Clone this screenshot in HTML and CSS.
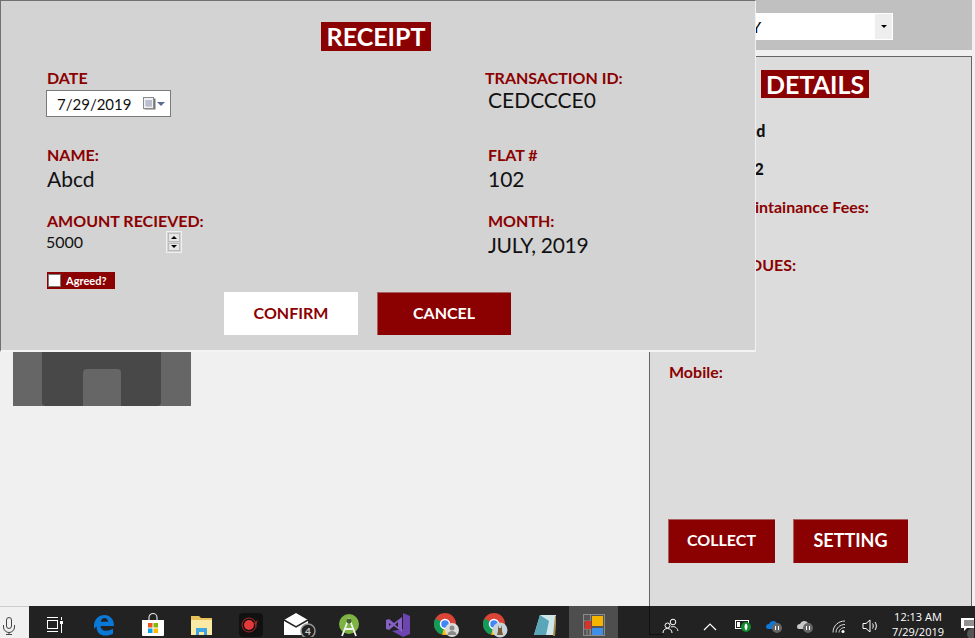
FILE: index.html
```html
<!DOCTYPE html>
<html lang="en">
<head>
    <meta charset="UTF-8">
    <title>Receipt</title>
    <link rel="stylesheet" href="styles.css">
</head>
<body>
    <div class="app">
        <div class="main">
            <div class="preview">
                <div class="preview-inner">
                    <div class="preview-knob"></div>
                </div>
            </div>
        </div>
        <div class="side">
            <div class="side-top">
                <div class="combo">
                    <span class="combo-text">JULY</span>
                    <span class="combo-btn"><i class="arrow-down"></i></span>
                </div>
            </div>
            <div class="details">
                <div class="details-head"><span class="banner">DETAILS</span></div>
                <div class="info-row info-name">Name: <b>Abcd</b></div>
                <div class="info-row info-flat">Flat #: <b>102</b></div>
                <div class="info-row info-fees">Maintainance Fees:</div>
                <div class="info-row info-dues">TOTAL DUES:</div>
                <div class="info-row info-mobile">Mobile:</div>
                <div class="details-actions">
                    <button class="action action-collect">COLLECT</button>
                    <button class="action action-setting">SETTING</button>
                </div>
            </div>
        </div>
    </div>

    <div class="receipt">
        <div class="receipt-head"><span class="banner banner-receipt">RECEIPT</span></div>
        <div class="receipt-grid">
            <div class="col-left">
                <div class="field field-date">
                    <div class="label">DATE</div>
                    <div class="date-input">
                        <span class="date-text">7/29/2019</span>
                        <svg class="cal" width="13" height="13" viewBox="0 0 13 13">
                            <rect x="1.5" y="1.5" width="11" height="11" fill="#777"/>
                            <rect x="0.5" y="0.5" width="10" height="11" fill="#eef0f4" stroke="#8b8b8b"/>
                            <path d="M2 4h7M2 6h7M2 8h7M4 3v7M6 3v7M8 3v7" stroke="#a9adc0" stroke-width="1"/>
                        </svg>
                        <i class="cal-arrow"></i>
                    </div>
                </div>
                <div class="field field-name">
                    <div class="label">NAME:</div>
                    <div class="value">Abcd</div>
                </div>
                <div class="field field-amount">
                    <div class="label">AMOUNT RECIEVED:</div>
                    <div class="amount-row">
                        <span class="amount">5000</span>
                        <span class="spinner">
                            <span class="spin-btn"><i class="arrow-up"></i></span>
                            <span class="spin-btn"><i class="arrow-down"></i></span>
                        </span>
                    </div>
                </div>
                <label class="agree"><span class="agree-box"></span>Agreed?</label>
            </div>
            <div class="col-right">
                <div class="field field-txn">
                    <div class="label label-txn">TRANSACTION ID:</div>
                    <div class="value value-txn">CEDCCCE0</div>
                </div>
                <div class="field field-flat">
                    <div class="label">FLAT #</div>
                    <div class="value">102</div>
                </div>
                <div class="field field-month">
                    <div class="label">MONTH:</div>
                    <div class="value value-month">JULY, 2019</div>
                </div>
            </div>
        </div>
        <div class="receipt-actions">
            <button class="btn btn-confirm">CONFIRM</button>
            <button class="btn btn-cancel">CANCEL</button>
        </div>
    </div>

    <div class="taskbar">
        <div class="mic">
            <svg width="12" height="18" viewBox="0 0 12 18" fill="none" stroke="#444" stroke-width="1">
                <rect x="3.500" y="0.500" width="5" height="11" rx="2.500"/>
                <path d="M0.500 8v2a5.500 5.500 0 0 0 11 0V8M6 15.500V17M3 17.500h6"/>
            </svg>
        </div>
        <div class="task-icons">
            <span class="task-icon">
                <svg width="18" height="16" viewBox="0 0 18 16" fill="none" stroke="#fff">
                    <rect x="1.500" y="3.500" width="10" height="8"/>
                    <path d="M1 0.500h11M1 14.500h11M15.500 0v3M15.500 7v9"/>
                    <rect x="14" y="4" width="3" height="3" fill="#fff" stroke="none"/>
                </svg>
            </span>
            <span class="task-icon">
                <svg width="22" height="22" viewBox="0 0 22 22">
                    <path d="M1 11C1.500 5 6 1 11.500 1 17 1 21 5 21 12H7.500c.2 3 2.500 4.800 5.500 4.800 2.500 0 5-.7 7-2v5c-2 1.200-4.500 1.800-7.500 1.800C6 21.600 3 17 3.800 12.500 2.800 13 2 13.500 1 15Zm6.800-3.200h7.400C15 5.500 13.500 4 11.500 4S8 5.500 7.800 7.800Z" fill="#0a78d7"/>
                </svg>
            </span>
            <span class="task-icon">
                <svg width="24" height="24" viewBox="0 0 24 24">
                    <path d="M8 7V4.500a4 4 0 0 1 8 0V7" fill="none" stroke="#ddd" stroke-width="1.200"/>
                    <path d="M1 7h22v15a1 1 0 0 1-1 1H2a1 1 0 0 1-1-1Z" fill="#fff"/>
                    <rect x="7" y="10" width="4.500" height="4.500" fill="#f25022"/>
                    <rect x="12.500" y="10" width="4.500" height="4.500" fill="#7fba00"/>
                    <rect x="7" y="15.500" width="4.500" height="4.500" fill="#00a4ef"/>
                    <rect x="12.500" y="15.500" width="4.500" height="4.500" fill="#ffb900"/>
                </svg>
            </span>
            <span class="task-icon">
                <svg width="22" height="19" viewBox="0 0 22 19">
                    <path d="M0 0h8l2 2h11v17H0Z" fill="#e8c35a"/>
                    <path d="M0 4h21v15H0Z" fill="#fbe9a6"/>
                    <path d="M5 19v-7h11v7h-3v-3H8v3Z" fill="#3ea6e0"/>
                </svg>
            </span>
            <span class="task-icon">
                <svg width="24" height="24" viewBox="0 0 24 24">
                    <rect width="24" height="24" rx="4" fill="#111"/>
                    <circle cx="10" cy="12" r="5" fill="#e23a3a"/>
                    <circle cx="10" cy="12" r="7" fill="none" stroke="#a92a2a"/>
                    <path d="M15 10l4-3-2 5 1 3Z" fill="#a92a2a"/>
                </svg>
            </span>
            <span class="task-icon">
                <svg width="33" height="24" viewBox="0 0 33 24">
                    <path d="M1 7 13 0l12 7v15H1Z" fill="#fff"/>
                    <path d="M1 7l12 7 12-7" fill="none" stroke="#222" stroke-width="1.500"/>
                    <circle cx="25" cy="18" r="7" fill="#222" stroke="#999" stroke-width="1.500"/>
                    <text x="25" y="22" class="mail-count">4</text>
                </svg>
            </span>
            <span class="task-icon">
                <svg width="24" height="24" viewBox="0 0 24 24">
                    <circle cx="12" cy="11" r="10" fill="#7cb342"/>
                    <path d="M12 5 5 23M12 5l7 18M7.500 16h9" stroke="#f2f2f2" stroke-width="1.800" fill="none"/>
                    <circle cx="12" cy="8" r="2.500" fill="#44602a"/>
                </svg>
            </span>
            <span class="task-icon">
                <svg width="26" height="24" viewBox="0 0 26 24">
                    <path d="M18 0l7 3v18l-7 3-11-6 11-2Z" fill="#6c45b0"/>
                    <path d="M1 7l3-1 5 4 8-6v15l-8-6-5 4-3-1Zm3 3v3l2-1.500Zm9-1-3 2.500 3 2.500Z" fill="#8661c5" fill-rule="evenodd"/>
                </svg>
            </span>
            <span class="task-icon chrome">
                <svg width="26" height="26" viewBox="0 0 26 26">
                    <circle cx="11" cy="12" r="11" fill="#db4437"/>
                    <path d="M11 12 22 12A11 11 0 0 1 8 22.600Z" fill="#f4c20d"/>
                    <path d="M11 12 8 22.600A11 11 0 0 1 1.500 6.500Z" fill="#0f9d58"/>
                    <circle cx="11" cy="12" r="4.500" fill="#4285f4" stroke="#fff" stroke-width="1.500"/>
                    <circle cx="18" cy="18" r="7" fill="#dcdcdc"/>
                    <circle cx="18" cy="16" r="2.500" fill="#8a8a8a"/>
                    <path d="M13.500 23a4.500 4 0 0 1 9 0Z" fill="#8a8a8a"/>
                </svg>
            </span>
            <span class="task-icon chrome">
                <svg width="26" height="26" viewBox="0 0 26 26">
                    <circle cx="11" cy="12" r="11" fill="#db4437"/>
                    <path d="M11 12 22 12A11 11 0 0 1 8 22.600Z" fill="#f4c20d"/>
                    <path d="M11 12 8 22.600A11 11 0 0 1 1.500 6.500Z" fill="#0f9d58"/>
                    <circle cx="11" cy="12" r="4.500" fill="#4285f4" stroke="#fff" stroke-width="1.500"/>
                    <circle cx="17" cy="18" r="7.500" fill="#c8d4dc"/>
                    <path d="M15 13l1 3h2l1-3v6l1 4h-6l1-4Z" fill="#7a5b3a"/>
                </svg>
            </span>
            <span class="task-icon">
                <svg width="24" height="22" viewBox="0 0 24 22">
                    <path d="M7 1h16l-1 20H1Z" fill="#cfe6ea"/>
                    <path d="M7 1 1 21h12l3-14Z" fill="#5aa6b8"/>
                    <path d="M22 2h1l-1 20h-2Z" fill="#a8873f"/>
                </svg>
            </span>
            <span class="task-icon task-active">
                <svg width="22" height="22" viewBox="0 0 22 22">
                    <rect x="0.500" y="0.500" width="21" height="21" fill="#555" stroke="#8a8a8a"/>
                    <path d="M7.500 1v20M1 7h6M1 15h6M7 15v6M4 15v6" stroke="#8a8a8a" fill="none"/>
                    <rect x="9" y="2" width="11" height="10" fill="#f5b400"/>
                    <rect x="9" y="14" width="11" height="7" fill="#3f8fe6"/>
                    <rect x="2" y="7" width="6" height="8" fill="#d8322a"/>
                </svg>
            </span>
        </div>
        <div class="tray">
            <svg class="tray-people" width="17" height="16" viewBox="0 0 17 16" fill="none" stroke="#fff">
                <circle cx="11" cy="4" r="2.800"/>
                <circle cx="5.500" cy="7.500" r="2.500"/>
                <path d="M1 15c0-3 2-4.500 4.500-4.500S10 12 10 15M9 9c3-1 6 0 7 4"/>
            </svg>
            <svg class="tray-chevron" width="14" height="8" viewBox="0 0 14 8" fill="none" stroke="#fff" stroke-width="1.200"><path d="M1 7l6-6 6 6"/></svg>
            <svg class="tray-battery" width="16" height="14" viewBox="0 0 16 14">
                <rect x="0.500" y="1.500" width="13" height="8" fill="none" stroke="#fff"/>
                <rect x="2" y="3" width="3" height="5" fill="#fff"/>
                <circle cx="11" cy="8" r="5" fill="#0f8a2d"/>
                <path d="M11 4.500c2 1 2 5 0 7-2-2-2-6 0-7Z" fill="#fff"/>
            </svg>
            <svg class="tray-cloud" width="17" height="14" viewBox="0 0 17 14">
                <path d="M1 8a3 3 0 0 1 3-3 4.500 4.500 0 0 1 8-1 3 3 0 0 1 0 6H3a2 2 0 0 1-2-2Z" fill="#1078d4"/>
                <circle cx="12" cy="9" r="5" fill="#666"/>
                <path d="M10.500 7v4M13.500 7v4" stroke="#fff"/>
            </svg>
            <svg class="tray-cloud" width="17" height="14" viewBox="0 0 17 14">
                <path d="M1 8a3 3 0 0 1 3-3 4.500 4.500 0 0 1 8-1 3 3 0 0 1 0 6H3a2 2 0 0 1-2-2Z" fill="#c8c8c8"/>
                <circle cx="12" cy="9" r="5" fill="#666"/>
                <path d="M10.500 7v4M13.500 7v4" stroke="#fff"/>
            </svg>
            <svg class="tray-wifi" width="14" height="13" viewBox="0 0 14 13" fill="none" stroke="#ddd">
                <path d="M1 12.500C1 6 6 1 13 1M4 12.500C4 8 8 4.500 13 4.500M7 12.500c0-2.500 2.500-5 6-5"/>
                <circle cx="11" cy="11.500" r="1.500" fill="#fff" stroke="none"/>
            </svg>
            <svg class="tray-sound" width="17" height="14" viewBox="0 0 17 14" fill="none" stroke="#fff">
                <path d="M1 4.500h3L8 1v12L4 9.500H1ZM10.500 4.500c1 1.500 1 3.500 0 5M13 3c1.800 2.500 1.800 5.500 0 8"/>
            </svg>
            <div class="clock">
                <div class="clock-time">12:13 AM</div>
                <div class="clock-date">7/29/2019</div>
            </div>
            <svg class="tray-notify" width="13" height="20" viewBox="0 0 13 20">
                <path d="M0 0h13v10H6l-3 3v-3H0Z" fill="#fff"/>
                <path d="M3 3h10M3 5h10M3 7h10" stroke="#222"/>
                <circle cx="12" cy="16" r="6" fill="#555"/>
            </svg>
        </div>
        <div class="taskbar-edge"></div>
    </div>
</body>
</html>
```

FILE: styles.css
```css
* {
    box-sizing: border-box;
}
body {
    margin: 0;
    width: 975px;
    height: 638px;
    overflow: hidden;
    position: relative;
    font-family: 'Lato', sans-serif;
    background-color: #f0f0f0;
    display: flex;
    flex-direction: column;
}
.app {
    display: flex;
    height: 606px;
}
.main {
    width: 649px;
    padding: 40px 0 0 13px;
}
.preview {
    width: 178px;
    height: 366px;
    background-color: #666;
    padding: 0 30px 0 29px;
}
.preview-inner {
    height: 100%;
    background-color: #484848;
    border-radius: 0 0 4px 4px;
    display: flex;
    align-items: flex-end;
    justify-content: center;
}
.preview-knob {
    width: 38px;
    height: 37px;
    background-color: #666;
    border-radius: 4px 4px 0 0;
}
.side {
    width: 323px;
    display: flex;
    flex-direction: column;
}
.side-top {
    height: 50px;
    background-color: #c0c0c0;
    padding: 13px 0 0 0;
}
.combo {
    width: 244px;
    height: 27px;
    background-color: #fff;
    display: flex;
    justify-content: space-between;
    font-size: 16px;
    line-height: 27px;
    padding-left: 77px;
}
.combo-btn {
    width: 17px;
    margin: 1px;
    background-color: #eee;
    display: flex;
    align-items: center;
    justify-content: center;
}
.details {
    margin-top: 6px;
    height: 550px;
    background-color: #dcdcdc;
    border: 1px solid #666;
    border-bottom: 0;
    padding: 0 0 0 18px;
    font-size: 16px;
    font-weight: 700;
    color: #8b0000;
}
.details-head {
    padding: 13px 0 0 93px;
    height: 64px;
}
.banner {
    display: inline-block;
    background-color: #8b0000;
    color: #fff;
    font-size: 25px;
    font-weight: 700;
    line-height: 28px;
    padding: 0 5px;
}
.info-row {
    line-height: 20px;
}
.info-row b {
    color: #111;
}
.info-name {
    margin-left: 10px;
}
.info-flat {
    margin: 18px 0 0 20px;
}
.info-fees {
    margin: 18px 0 0 64px;
}
.info-dues {
    margin: 38px 0 0 29px;
}
.info-mobile {
    margin: 87px 0 0 1px;
}
.details-actions {
    display: flex;
    gap: 18px;
    margin-top: 137px;
}
.action {
    height: 44px;
    border: 0;
    background-color: #8b0000;
    box-shadow: inset 1px 1px 0 #a86060;
    color: #fff;
    font-family: 'Lato', sans-serif;
    font-weight: 700;
    font-size: 16px;
    padding: 0 0 3px 0;
}
.action-collect {
    width: 107px;
}
.action-setting {
    width: 115px;
    font-size: 18px;
}

/* receipt dialog sits over the main window */
.receipt {
    position: absolute;
    left: 0;
    top: 0;
    width: 756px;
    height: 352px;
    background-color: #d3d3d3;
    border: 1px solid #707070;
    border-right: 1px solid #f0f0f0;
    border-bottom: 2px solid #f4f4f4;
    color: #111;
}
.receipt-head {
    text-align: center;
    padding: 21px 4px 0 0;
    height: 69px;
}
.banner-receipt {
    line-height: 29px;
    padding: 0 6px;
}
.receipt-grid {
    display: flex;
    justify-content: space-between;
    padding-left: 46px;
}
.col-left {
    width: 438px;
}
.col-right {
    width: 267px;
}
.label {
    font-size: 16px;
    font-weight: 700;
    color: #8b0000;
    line-height: 15px;
}
.value {
    font-size: 21px;
    line-height: 26px;
    margin-top: 4px;
}
.field-name {
    margin-top: 30px;
}
.field-amount {
    margin-top: 21px;
}
.date-input {
    width: 125px;
    height: 27px;
    margin: 5px 0 0 -1px;
    background-color: #fff;
    border: 1px solid #7a7a7a;
    font-size: 15px;
    line-height: 25px;
    padding-left: 10px;
    display: flex;
    align-items: center;
}
.date-text {
    padding-top: 1px;
}
.cal {
    margin-left: 12px;
}
.cal-arrow {
    width: 0;
    height: 0;
    margin-left: 1px;
    border-left: 4px solid transparent;
    border-right: 4px solid transparent;
    border-top: 4px solid #5a6a90;
}
.amount-row {
    display: flex;
    align-items: center;
    height: 24px;
    margin-top: 1px;
}
.amount {
    font-size: 16px;
    width: 120px;
    margin-left: -1px;
}
.spinner {
    width: 16px;
    height: 22px;
    border: 1px solid #f0f0f0;
    display: flex;
    flex-direction: column;
    gap: 1px;
    padding: 1px;
    margin-top: 2px;
}
.spin-btn {
    flex: 1;
    background-color: #e6e6e6;
    border: 1px solid #bbb;
    display: flex;
    align-items: center;
    justify-content: center;
}
.arrow-up,
.arrow-down {
    width: 0;
    height: 0;
    border-left: 3px solid transparent;
    border-right: 3px solid transparent;
}
.arrow-up {
    border-bottom: 3px solid #000;
}
.arrow-down {
    border-top: 3px solid #000;
}
.agree {
    display: flex;
    align-items: center;
    width: 68px;
    height: 17px;
    margin-top: 19px;
    background-color: #8b0000;
    color: #fff;
    font-size: 11px;
    font-weight: 700;
}
.agree-box {
    width: 13px;
    height: 13px;
    margin: 0 5px 0 1px;
    background-color: #fff;
    border: 1px solid #777;
}
.label-txn {
    margin-left: -3px;
}
.value-txn {
    margin-top: 2px;
}
.field-flat {
    margin-top: 34px;
}
.field-month {
    margin-top: 21px;
}
.value-month {
    letter-spacing: -0.3px;
}
.receipt-actions {
    position: absolute;
    left: 223px;
    top: 291px;
    display: flex;
    gap: 19px;
}
.btn {
    width: 134px;
    height: 43px;
    border: 0;
    font-family: 'Lato', sans-serif;
    font-size: 16px;
    font-weight: 700;
    padding: 0 0 2px 0;
}
.btn-confirm {
    background-color: #fff;
    color: #8b0000;
}
.btn-cancel {
    background-color: #8b0000;
    box-shadow: inset 1px 1px 0 #a86060;
    color: #fff;
}

.taskbar {
    height: 32px;
    background-color: #222;
    display: flex;
    position: relative;
}
.taskbar-edge {
    position: absolute;
    left: 649px;
    top: 0;
    width: 14px;
    height: 29px;
    border-left: 1px solid #111;
    border-bottom: 1px solid #111;
}
.mic {
    width: 29px;
    background-color: #f0f0f0;
    border-top: 1px solid #ccc;
    padding: 10px 0 0 3px;
    overflow: hidden;
}
.task-icons {
    display: flex;
    width: 621px;
    padding-left: 1px;
}
.task-icon {
    width: 49px;
    height: 32px;
    padding-top: 6px;
    display: flex;
    justify-content: center;
    align-items: center;
    overflow: hidden;
}
.task-active {
    background-color: #4e4e4e;
}
.mail-count {
    font-family: 'Lato', sans-serif;
    font-size: 10px;
    font-weight: 700;
    fill: #ccc;
    text-anchor: middle;
}
.tray {
    flex: 1;
    display: flex;
    align-items: flex-start;
    color: #fff;
    font-family: 'Open Sans', sans-serif;
    font-size: 11px;
    overflow: hidden;
    padding-top: 12px;
}
.tray-people {
    margin-left: 12px;
}
.tray-chevron {
    margin: 5px 0 0 24px;
}
.tray-battery {
    margin: 1px 0 0 18px;
}
.tray-cloud {
    margin: 1px 0 0 14px;
}
.tray-wifi {
    margin: 2px 0 0 19px;
}
.tray-sound {
    margin: 1px 0 0 16px;
}
.clock {
    margin: -9px 0 0 10px;
    width: 58px;
    text-align: center;
    white-space: nowrap;
}
.clock-time {
    line-height: 16px;
}
.clock-date {
    line-height: 13px;
}
.tray-notify {
    margin: 0 0 0 14px;
}
```
